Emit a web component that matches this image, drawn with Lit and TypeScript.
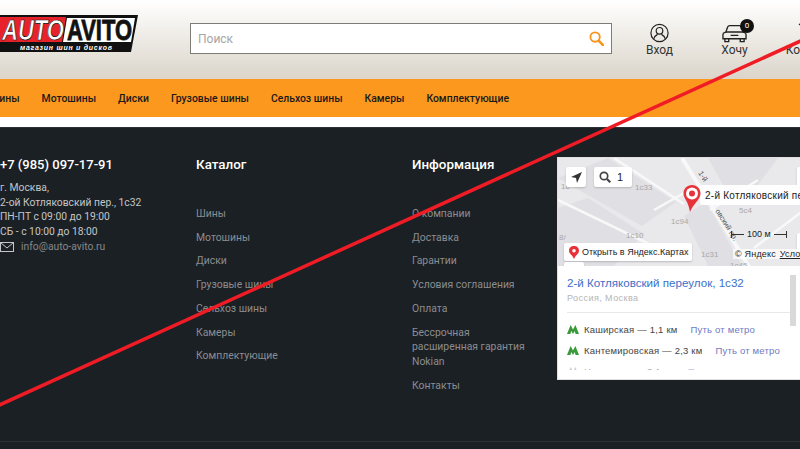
import { LitElement, html, css, svg } from 'lit';
import { customElement } from 'lit/decorators.js';

const NAV = ['Шины', 'Мотошины', 'Диски', 'Грузовые шины', 'Сельхоз шины', 'Камеры', 'Комплектующие'];
const INFO = ['О компании', 'Доставка', 'Гарантии', 'Условия соглашения', 'Оплата', 'Бессрочная расширенная гарантия Nokian', 'Контакты'];

const metroIcon = (color: string) => svg`<svg class="metro" width="12" height="9" viewBox="0 0 12 9"><path d="M0 9 L3.6 0 L6 4.6 L8.4 0 L12 9 H8.6 L7.7 6 L6 9 L4.3 6 L3.4 9 Z" fill="${color}"/></svg>`;

@customElement('app-root')
export class AppRoot extends LitElement {
  static styles = css`
    :host {
      display: block;
      width: 800px;
      height: 449px;
      overflow: hidden;
      position: relative;
      font-family: Roboto, 'Liberation Sans', sans-serif;
      background: #fff;
    }

    /* Header */
    .header {
      height: 79px;
      display: flex;
      align-items: flex-start;
      background: linear-gradient(#ffffff, #dbd5ca);
    }
    .logo {
      margin-top: 15px;
      width: 139px;
      height: 40px;
      flex: none;
    }
    .search {
      margin: 23px 0 0 51px;
      width: 422px;
      height: 31px;
      flex: none;
      box-sizing: border-box;
      border: 1px solid #7d7d78;
      background: #fff;
      display: flex;
      align-items: center;
      justify-content: space-between;
      padding: 0 7px;
      font-size: 12px;
      color: #a6a6a6;
    }
    .actions {
      display: flex;
      margin: 23px 0 0 34px;
      gap: 48px;
    }
    .action {
      display: flex;
      flex-direction: column;
      align-items: center;
      width: 27px;
      font-size: 12px;
      line-height: 14px;
      color: #333;
      white-space: nowrap;
      position: relative;
    }
    .action svg {
      display: block;
      margin-bottom: 0;
    }
    .badge {
      position: absolute;
      top: -4px;
      left: 19px;
      width: 14px;
      height: 14px;
      border-radius: 50%;
      background: #111;
      color: #fff;
      font-size: 8px;
      line-height: 14px;
      text-align: center;
    }

    /* Nav */
    .nav {
      height: 38px;
      background: #fd981e;
      display: flex;
      align-items: center;
      gap: 22px;
      margin-bottom: 10px;
      font-size: 10.4px;
      font-weight: 500;
      color: #1a1a1a;
      white-space: nowrap;
    }
    .nav span:first-child {
      margin-left: -10.5px;
    }

    /* Footer */
    .footer {
      height: 322px;
      box-sizing: border-box;
      background: #1b2025;
      border-top: 1px solid #2b3036;
      display: flex;
      align-items: flex-start;
      position: relative;
      padding-top: 28px;
    }
    .contacts {
      width: 196px;
      flex: none;
      color: #c4c6c8;
      font-size: 10.3px;
      line-height: 14.7px;
      white-space: nowrap;
    }
    .phone {
      font-size: 13px;
      line-height: 18px;
      font-weight: 500;
      color: #fff;
      margin-bottom: 7px;
    }
    .mail {
      display: flex;
      align-items: center;
      gap: 7px;
      color: #85888b;
    }
    .col {
      flex: none;
      width: 216px;
    }
    .col h3 {
      margin: 0 0 33px;
      font-size: 13.4px;
      line-height: 18px;
      font-weight: 500;
      color: #fff;
    }
    .links {
      display: flex;
      flex-direction: column;
      gap: 9px;
      width: 120px;
      font-size: 10.4px;
      line-height: 14.7px;
      color: #8b8d90;
    }

    /* Map widget */
    .map {
      position: absolute;
      left: 557px;
      top: 29px;
      width: 262px;
      height: 223px;
      box-sizing: border-box;
      background: #fff;
      border: 1px solid #e0e0e0;
      display: flex;
      flex-direction: column;
      overflow: hidden;
    }
    .canvas {
      height: 108px;
      flex: none;
      position: relative;
      background: #e9e9ec;
      overflow: hidden;
      font-family: 'Liberation Sans', sans-serif;
    }
    .base {
      position: absolute;
      inset: 0;
    }
    .chip {
      position: absolute;
      background: #fff;
      border-radius: 2px;
      box-shadow: 0 1px 2px rgba(0, 0, 0, 0.2);
      display: flex;
      align-items: center;
      color: #222;
      white-space: nowrap;
    }
    .geo { left: 8px; top: 9px; width: 20px; height: 20px; justify-content: center; }
    .zoom { left: 36px; top: 9px; width: 38px; height: 20px; gap: 6px; padding-left: 5px; box-sizing: border-box; font-size: 11px; }
    .layers { left: 239px; top: 9px; width: 20px; height: 20px; }
    .plus { left: 239px; top: 75px; width: 20px; height: 20px; }
    .pin-label { left: 142px; top: 27px; width: 120px; height: 20px; font-size: 10px; padding-left: 5px; box-sizing: border-box; box-shadow: none; background: rgba(255,255,255,0.92); letter-spacing: 0.25px; }
    .open { left: 6px; top: 85px; width: 128px; height: 18px; font-size: 9px; gap: 3px; padding-left: 5px; box-sizing: border-box; }
    .stub { left: 6px; top: 104px; width: 20px; height: 10px; }
    .pin { position: absolute; left: 125px; top: 27px; }
    .scale { position: absolute; left: 173px; top: 71px; display: flex; align-items: center; font-size: 9px; color: #222; gap: 3px; }
    .scale i { display: block; width: 12px; height: 7px; position: relative; }
    .scale i::after { content: ''; position: absolute; left: 0; right: 0; top: 3px; border-top: 1px solid #333; }
    .scale i:first-child { border-left: 1px solid #333; }
    .scale i:last-child { border-right: 1px solid #333; }
    .copy { position: absolute; left: 175px; top: 91px; font-size: 9px; color: #222; background: rgba(255,255,255,0.7); padding: 0 2px; white-space: nowrap; letter-spacing: 0.2px; }
    .copy u { margin-left: 1px; }
    .card {
      flex: 1;
      min-height: 0;
      position: relative;
      padding: 9px 9px 0;
      margin-bottom: 9px;
      overflow: hidden;
      font-family: 'Liberation Sans', sans-serif;
    }
    .title {
      font-size: 11.6px;
      line-height: 16px;
      color: #3c6fc8;
      white-space: nowrap;
    }
    .region {
      font-size: 9px;
      line-height: 12px;
      margin-top: 1px;
      color: #b5b5b5;
      letter-spacing: 0.45px;
    }
    .sep {
      height: 1px;
      background: #e8e8e8;
      margin: 8px 0 9px;
      width: 224px;
    }
    .station {
      display: flex;
      align-items: center;
      height: 14px;
      margin-bottom: 7px;
      font-size: 9.5px;
      color: #444;
      white-space: nowrap;
      letter-spacing: 0.2px;
    }
    .station .metro { margin-right: 5px; }
    .station a { margin-left: 13px; color: #6f79c4; }
    .station.faded { opacity: 0.45; }
    .scroll {
      position: absolute;
      left: 232px;
      top: 9px;
      width: 6px;
      height: 51px;
      background: #d9d9d9;
    }

    .rule {
      position: absolute;
      left: 0;
      right: 0;
      top: 313px;
      border-top: 1px solid #2a3035;
    }
    .strike {
      position: absolute;
      inset: 0;
      pointer-events: none;
    }
  `;

  render() {
    return html`
      <div class="header">
        <svg class="logo" viewBox="0 0 139 40">
          <path d="M-5 0 H138 L131 37 H-5 Z" fill="#111"/>
          <path d="M-5 2 H66 L62 27 H-5 Z" fill="#e8222b"/>
          <path d="M67 3 H135 L131 27 H63 Z" fill="#fff"/>
          <text x="2" y="25" font-family="Liberation Sans" font-weight="700" font-style="italic" font-size="29" fill="#fff" stroke="#111" stroke-width="0.7" textLength="62" lengthAdjust="spacingAndGlyphs">AUTO</text>
          <text x="67" y="25" font-family="Liberation Sans" font-weight="700" font-size="29" fill="#111" stroke="#111" stroke-width="0.8" textLength="65" lengthAdjust="spacingAndGlyphs">AVITO</text>
          <text x="20" y="35" font-family="Liberation Sans" font-weight="700" font-style="italic" font-size="7" fill="#fff" textLength="92" lengthAdjust="spacing">магазин шин и дисков</text>
        </svg>
        <div class="search">
          <span>Поиск</span>
          <svg width="15" height="15" viewBox="0 0 16 16" fill="none" stroke="#f7941d" stroke-width="2"><circle cx="6.5" cy="6.5" r="5"/><path d="M10.5 10.5 L15 15" stroke-width="2.8" stroke-linecap="round"/></svg>
        </div>
        <div class="actions">
          <div class="action">
            <svg width="19" height="20" viewBox="0 0 19 20" fill="none" stroke="#222" stroke-width="1.2"><circle cx="9.5" cy="10" r="8.6"/><circle cx="9.5" cy="7.8" r="3.3"/><path d="M3.7 16 C4.2 12.8 6.5 12 7.6 11.4 M15.3 16 C14.8 12.8 12.5 12 11.4 11.4"/></svg>
            <span>Вход</span>
          </div>
          <div class="action">
            <svg width="25" height="20" viewBox="0 0 26 20" fill="none" stroke="#222" stroke-width="1.4"><path d="M1 11.5 C1 9.5 3 9.5 4 9 L6 3.5 C6.3 2.6 7 2.3 8 2.3 H18 C19 2.3 19.7 2.6 20 3.5 L22 9 C23 9.5 25 9.5 25 11.5 V16 H1 Z"/><path d="M4 9 H22 M3 16 V19 H7 V16 M19 16 V19 H23 V16 M9 12.5 H17"/></svg>
            <span>Хочу</span>
            <span class="badge">0</span>
          </div>
          <div class="action">
            <svg width="24" height="20" viewBox="0 0 24 20" fill="none" stroke="#222" stroke-width="1.4"><path d="M1 1 L4 3 L7 13 H19 L22 5 H5"/><circle cx="8" cy="17" r="1.5"/><circle cx="17" cy="17" r="1.5"/></svg>
            <span>Корзина</span>
          </div>
        </div>
      </div>

      <div class="nav">${NAV.map((n) => html`<span>${n}</span>`)}</div>

      <div class="footer">
        <div class="contacts">
          <div class="phone">+7 (985) 097-17-91</div>
          <div>г. Москва,</div>
          <div>2-ой Котляковский пер., 1с32</div>
          <div>ПН-ПТ с 09:00 до 19:00</div>
          <div>СБ - с 10:00 до 18:00</div>
          <div class="mail">
            <svg width="14" height="10" viewBox="0 0 14 10" fill="none" stroke="#c4c6c8"><rect x="0.5" y="0.5" width="13" height="9"/><path d="M0.5 0.5 L7 6 L13.5 0.5"/></svg>
            info@auto-avito.ru
          </div>
        </div>
        <div class="col">
          <h3>Каталог</h3>
          <div class="links">${NAV.map((n) => html`<span>${n}</span>`)}</div>
        </div>
        <div class="col">
          <h3>Информация</h3>
          <div class="links" style="width:125px">${INFO.map((n) => html`<span>${n}</span>`)}</div>
        </div>

        <div class="map">
          <div class="canvas">
            <svg class="base" width="260" height="108" viewBox="0 0 260 108">
              <g fill="#dfdfe4">
                <path d="M0 20 L50 0 L118 44 L84 68 Z"/>
                <path d="M0 50 L30 40 L86 76 L56 108 H0 Z"/>
                <path d="M126 58 L148 44 L184 108 H150 Z"/>
                <path d="M150 0 H220 L190 40 L170 36 Z"/>
              </g>
              <g fill="none" stroke="#f8f8f8" stroke-width="2.5">
                <path d="M124 0 L192 110" stroke-width="4"/>
                <path d="M56 0 L126 46 M0 42 L120 100"/>
                <path d="M96 52 L128 34 M152 52 L200 22 M196 90 L262 40"/>
              </g>
              <g font-size="8" fill="#a8a8a8" font-family="Liberation Sans">
                <text x="77" y="32">1с33</text>
                <text x="113" y="66">1с94</text>
                <text x="68" y="80">1с10</text>
                <text x="143" y="99">1с31</text>
                <text x="181" y="55">5с4</text>
                <text x="3" y="31">1с</text>
                <text x="1" y="82">8/</text>
                <text x="172" y="110">1с45</text>
              </g>
              <text font-size="7.5" fill="#555" font-family="Liberation Sans" transform="translate(140 15) rotate(58)">1-й</text>
              <text font-size="7.5" fill="#555" font-family="Liberation Sans" transform="translate(157 53) rotate(58)">овский пр.</text>
            </svg>
            <div class="chip geo"><svg width="13" height="13" viewBox="0 0 13 13"><path d="M12 1 L1 6 L6 7 L7 12 Z" fill="#333"/></svg></div>
            <div class="chip zoom"><svg width="12" height="12" viewBox="0 0 12 12" fill="none" stroke="#444" stroke-width="1.7"><circle cx="5" cy="5" r="3.7"/><path d="M8 8 L11.3 11.3" stroke-width="2.2"/></svg>1</div>
            <div class="chip layers"></div>
            <div class="chip plus"></div>
            <div class="chip pin-label">2-й Котляковский переулок</div>
            <svg class="pin" width="18" height="28" viewBox="0 0 18 28"><path d="M9 0 C4 0 0.5 3.8 0.5 8.5 C0.5 13.5 5 15 7 27 C10 19 17.5 14.5 17.5 8.5 C17.5 3.8 14 0 9 0 Z" fill="#e8323a"/><circle cx="9" cy="8.5" r="6" fill="#fff"/><circle cx="9" cy="8.5" r="3" fill="#e8323a"/></svg>
            <div class="scale"><i></i><span>100 м</span><i></i></div>
            <div class="chip open"><svg width="10" height="13" viewBox="0 0 10 13"><path d="M5 0 C2 0 0 2 0 4.8 C0 8 3.5 9 5 13 C6.5 9 10 8 10 4.8 C10 2 8 0 5 0 Z" fill="#e8323a"/><circle cx="5" cy="4.8" r="1.8" fill="#fff"/></svg>Открыть в Яндекс.Картах</div>
            <div class="chip stub"></div>
            <div class="copy">© Яндекс <u>Условия</u></div>
          </div>
          <div class="card">
            <div class="title">2-й Котляковский переулок, 1с32</div>
            <div class="region">Россия, Москва</div>
            <div class="sep"></div>
            <div class="station">${metroIcon('#3a9a3a')}Каширская — 1,1 км<a>Путь от метро</a></div>
            <div class="station">${metroIcon('#3a9a3a')}Кантемировская — 2,3 км<a>Путь от метро</a></div>
            <div class="station faded">${metroIcon('#999')}Царицыно — 3,1 км<a>Путь от метро</a></div>
            <div class="scroll"></div>
          </div>
        </div>
        <div class="rule"></div>
      </div>

      <svg class="strike" width="800" height="449" viewBox="0 0 800 449"><path d="M-5 407 L805 39" stroke="#ef1c25" stroke-width="3.5" fill="none"/></svg>
    `;
  }
}
